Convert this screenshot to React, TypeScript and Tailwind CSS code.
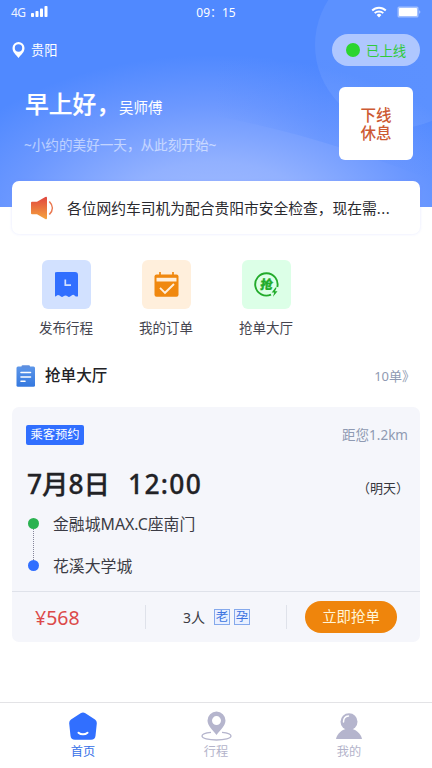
import type { ReactNode } from "react";

const FONT = "font-['Noto_Sans','Noto_Sans_CJK_SC',sans-serif]";

const StatusBar = () => (
  <div className="flex h-[25px] items-center justify-between px-[11px] text-white">
    <div className="flex w-[80px] items-center gap-[6px]">
      <span className="text-[12px] leading-4 tracking-[-0.6px] text-white/90">4G</span>
      <svg width="18" height="12" viewBox="0 0 18 12" fill="currentColor" className="-mt-[3px]">
        <rect x="0" y="8" width="3" height="4" rx="0.8" />
        <rect x="4.5" y="6" width="3" height="6" rx="0.8" />
        <rect x="9" y="3.5" width="3" height="8.5" rx="0.8" />
        <rect x="13.5" y="1" width="3" height="11" rx="0.8" />
      </svg>
    </div>
    <span className="text-[12px] leading-4">09：15</span>
    <div className="-mt-[2px] flex w-[80px] items-center justify-end gap-[10px]">
      <svg width="16" height="12" viewBox="0 0 16 12" fill="none" stroke="currentColor" strokeWidth="1.9">
        <path d="M1.2 4.5a9.6 9.6 0 0 1 13.6 0" />
        <path d="M3.7 7.2a6.1 6.1 0 0 1 8.6 0" />
        <path d="M8 11.5 5.6 9a3.4 3.4 0 0 1 4.8 0Z" fill="currentColor" stroke="none" />
      </svg>
      <svg width="24" height="12" viewBox="0 0 24 12" fill="currentColor">
        <rect x="0.5" y="0.5" width="21" height="11" rx="1.5" fillOpacity="0.45" />
        <rect x="2" y="2" width="18" height="8" rx="0.8" />
        <path d="M22.2 4v4l1.3-2Z" fillOpacity="0.5" />
      </svg>
    </div>
  </div>
);

const HeroBackdrop = () => (
  <svg className="absolute inset-0" width="432" height="207" viewBox="0 0 432 207">
    <defs>
      <radialGradient id="glow" gradientUnits="userSpaceOnUse" cx="0" cy="0" r="1" gradientTransform="translate(215 220) scale(290 165)">
        <stop offset="0" stopColor="#a3bcff" />
        <stop offset="0.35" stopColor="#92b1ff" />
        <stop offset="0.7" stopColor="#6c98ff" />
        <stop offset="1" stopColor="#5089ff" />
      </radialGradient>
      <linearGradient id="fold" x1="0" y1="0" x2="1" y2="0">
        <stop offset="0" stopColor="#4a84ff" stopOpacity="0" />
        <stop offset="0.5" stopColor="#4a84ff" stopOpacity="0.25" />
        <stop offset="1" stopColor="#4a84ff" stopOpacity="0" />
      </linearGradient>
    </defs>
    <rect width="432" height="207" fill="#5089ff" />
    <rect width="432" height="207" fill="url(#glow)" />
    <path d="M215 116C290 130 360 152 432 180V60H215Z" fill="url(#fold)" />
    <circle cx="398" cy="45" r="83" fill="#fff" fillOpacity="0.07" />
  </svg>
);

const Shortcut = ({ label, tint, children }: { label: string; tint: string; children: ReactNode }) => (
  <div className="flex w-[60px] flex-col items-center">
    <div className={`flex size-[49px] items-center justify-center rounded-[6px] ${tint}`}>{children}</div>
    <span className="mt-[9px] whitespace-nowrap text-[13.5px] leading-5 text-[#45454f]">{label}</span>
  </div>
);

const PublishIcon = () => (
  <svg width="23" height="25" viewBox="0 0 23 25">
    <path d="M3 0h17a3 3 0 0 1 3 3v21.3q-1.800.7-3.200-.6-1.500-1.600-3.200-.2l-1.500 1.100q-1.300.8-2.600-.3-2-1.800-4 0-1.300 1.100-2.600.3l-1.300-1q-1.700-1.500-3 .2-1 1.200-2.600.5V3a3 3 0 0 1 3-3Z" fill="#316fff" />
    <path d="M10.300 7.500v5.700h5.700" fill="none" stroke="#d2e1ff" strokeWidth="1.700" />
  </svg>
);

const OrderIcon = () => (
  <svg width="25" height="25" viewBox="0 0 25 25">
    <path d="M6 0v4M19 0v4" stroke="#f0880f" strokeWidth="1.700" />
    <rect x="0.500" y="2.500" width="24" height="22.200" rx="2" fill="#f0880f" />
    <path d="M2.500 5.800h20v3.700h-20Z" fill="#ffefdc" />
    <path d="m6 15.800 5 5L20 12" fill="none" stroke="#ffefdc" strokeWidth="1.900" />
  </svg>
);

const GrabIcon = () => (
  <svg width="25" height="25" viewBox="0 0 25 25">
    <path d="M17 22.600A11.200 11.200 0 1 1 23.300 15" fill="none" stroke="#22ab2b" strokeWidth="1.900" />
    <text x="12.300" y="16.800" textAnchor="middle" fontSize="12.500" fontWeight="900" fill="#22ab2b" stroke="#22ab2b" strokeWidth="0.300" transform="skewX(-8) translate(2 0)">
      抢
    </text>
    <path d="m21.500 15.500-3.800 5h2.500l-1.200 4.300 4.500-5.600h-2.500l1.700-3.700Z" fill="#22ab2b" />
  </svg>
);

const Tab = ({ label, color, children }: { label: string; color: string; children: ReactNode }) => (
  <div className={`flex w-[133px] flex-col items-center pt-[8px] ${color}`}>
    <div className="flex h-[30px] items-center">{children}</div>
    <span className="mt-[2px] text-[12.200px] leading-[18px]">{label}</span>
  </div>
);

export default function App() {
  return (
    <div className={`flex h-[768px] w-[432px] flex-col overflow-hidden bg-white ${FONT}`}>
      <header className="relative h-[207px] shrink-0">
        <HeroBackdrop />
        <div className="relative">
          <StatusBar />
          <div className="flex items-center justify-between px-[12px] pt-[9px]">
            <div className="flex items-center gap-[6px] text-white">
              <svg width="13" height="16" viewBox="0 0 13 16">
                <path fillRule="evenodd" d="M6.500 0a6 6 0 0 1 6 6c0 4.300-3.400 6.600-6 10C3.900 12.600.5 10.300.5 6a6 6 0 0 1 6-6Zm0 2.300a3.700 3.700 0 1 0 0 7.400 3.700 3.700 0 0 0 0-7.400Z" fill="#fff" />
              </svg>
              <span className="text-[13.200px] leading-5">贵阳</span>
            </div>
            <div className="flex h-[32px] w-[88px] items-center gap-[6px] rounded-full bg-[#afc7ff] pl-[14px] text-[13.400px] text-[#2fca3c]">
              <span className="size-[14px] rounded-full bg-[#2bd52f]" />
              <span className="mt-[2px] whitespace-nowrap">已上线</span>
            </div>
          </div>
          <div className="flex items-start justify-between pl-[25px] pr-[19px] pt-[21px] text-white">
            <div>
              <div className="-mt-px flex items-baseline whitespace-nowrap leading-[36px]">
                <span className="w-[94px] text-[23.800px] font-medium [-webkit-text-stroke:0.2px]">早上好，</span>
                <span className="text-[14.500px]">吴师傅</span>
              </div>
              <p className="-ml-px mt-[10px] whitespace-nowrap text-[13.600px] leading-5 text-white/55">~小约的美好一天，从此刻开始~</p>
            </div>
            <div className="flex h-[73px] w-[74px] flex-col items-center justify-center rounded-[6px] bg-white text-[15.500px] font-medium leading-[18px] text-[#cd5a33]">
              <span>下线</span>
              <span>休息</span>
            </div>
          </div>
        </div>
      </header>

      <section className="relative mx-[12px] -mt-[26px] flex h-[53px] shrink-0 items-center rounded-[7px] bg-white pl-[18px] shadow-[0_0_3px_rgba(120,140,255,0.2)]">
        <svg width="24" height="24" viewBox="0 0 24 24">
          <defs>
            <linearGradient id="horn" x1="0" y1="0" x2="0" y2="1">
              <stop offset="0" stopColor="#e0463f" />
              <stop offset="1" stopColor="#f5a33d" />
            </linearGradient>
          </defs>
          <path d="M2 5.800h5L15.300 1q1.700-.8 1.700 1v20q0 1.800-1.700 1L7 18.200H2q-1 0-1-1V6.800q0-1 1-1Z" fill="url(#horn)" />
          <path d="M19.300 5.500c4 4 4 9 0 13" fill="none" stroke="#ea7850" strokeWidth="1.600" />
        </svg>
        <p className="ml-[13px] whitespace-nowrap text-[14.750px] leading-5 text-[#29292e]">各位网约车司机为配合贵阳市安全检查，现在需<span className="tracking-[0.600px]">...</span></p>
      </section>

      <nav className="ml-[36px] mt-[26px] flex gap-[40px]">
        <Shortcut label="发布行程" tint="bg-[#d2e1ff]">
          <PublishIcon />
        </Shortcut>
        <Shortcut label="我的订单" tint="bg-[#ffefdc]">
          <OrderIcon />
        </Shortcut>
        <Shortcut label="抢单大厅" tint="bg-[#dcffe7]">
          <GrabIcon />
        </Shortcut>
      </nav>

      <div className="mt-[27px] flex h-[22px] items-center pl-[16px] pr-[17px]">
        <svg width="20" height="22" viewBox="0 0 20 22">
          <defs>
            <linearGradient id="board" x1="0" y1="0" x2="0" y2="1">
              <stop offset="0" stopColor="#5d96e9" />
              <stop offset="1" stopColor="#3478df" />
            </linearGradient>
          </defs>
          <rect x="0.500" y="1.500" width="18.500" height="20.300" rx="1.500" fill="url(#board)" />
          <rect x="5.500" y="0.200" width="8.500" height="3" rx="1.200" fill="#5d8fe0" />
          <path d="M5 7.500h9.500M5 12h9.500M5 16.300h4" stroke="#fff" strokeWidth="1.600" strokeLinecap="round" />
        </svg>
        <h2 className="ml-[9px] text-[15.600px] font-medium text-[#222226]">抢单大厅</h2>
        <span className="ml-auto mt-[2px] text-[13px] text-[#8f9ab2]">10单》</span>
      </div>

      <article className="mx-[12px] mt-[20px] h-[235px] shrink-0 rounded-[7px] bg-[#f5f6fb]">
        <div className="flex h-[185px] flex-col border-b border-[#dfe2ea] pl-[14px] pt-[18px]">
          <div className="flex items-center justify-between pr-[12px]">
            <span className="flex h-[20px] w-[58px] items-center justify-center whitespace-nowrap rounded-[2px] bg-[#316fff] text-[12.300px] text-white">乘客预约</span>
            <span className="text-[13.500px] leading-5 text-[#8f9ab2]">距您1.2km</span>
          </div>
          <div className="mt-[20px] flex h-[38px] items-center justify-between pr-[11px] leading-[38px]">
            <div className="ml-px flex items-baseline text-[26.400px] font-medium text-[#222226] [-webkit-text-stroke:0.3px]">
              <span className="w-[101px]">7月8日</span>
              <span className="tracking-[1.300px]">12:00</span>
            </div>
            <span className="mt-[8px] text-[13px] text-[#36363d]">（明天）</span>
          </div>
          <div className="mt-[10px] flex">
            <div className="flex w-[14px] flex-col items-center pt-[5px]">
              <span className="size-[11px] rounded-full bg-[#2bb251]" />
              <span className="h-[31px] border-l border-dotted border-[#85859a]" />
              <span className="size-[11px] rounded-full bg-[#316fff]" />
            </div>
            <div className="ml-[13px] flex flex-col gap-[20px] text-[15.850px] leading-[22px] text-[#3b3b44]">
              <span>金融城MAX.C座南门</span>
              <span>花溪大学城</span>
            </div>
          </div>
        </div>
        <div className="flex h-[50px] items-center">
          <div className="w-[133px] pl-[23px] pt-[2px] text-[19.500px] text-[#dc4a4a]">¥568</div>
          <div className="flex h-[24px] w-[142px] items-center border-x border-[#dfe2ea] pl-[37px] text-[#3b3b44]">
            <span className="text-[14px]">3人</span>
            <span className="ml-[9px] flex size-[16px] items-center justify-center border border-[#85a9ec] bg-[#e9f0ff] pt-px text-[12.500px] leading-none text-[#3c74e0]">老</span>
            <span className="ml-[4px] flex size-[16px] items-center justify-center border border-[#85a9ec] bg-[#e9f0ff] pt-px text-[12.500px] leading-none text-[#3c74e0]">孕</span>
          </div>
          <button className="ml-[18px] h-[32px] w-[92px] rounded-full bg-[#ef850c] text-[14.400px] text-[#fff5d8]">立即抢单</button>
        </div>
      </article>

      <footer className="mt-auto flex h-[66px] shrink-0 justify-center border-t border-[#e3e3e6]">
        <Tab label="首页" color="text-[#3570e8]">
          <svg width="28" height="28" viewBox="0 0 28 28">
            <path d="M11.600 1.200q2.400-1.600 4.800 0l9.600 6.300q2 1.500 1.800 4l-1.300 12.300q-.4 4-4.500 4H6q-4.100 0-4.500-4L.2 11.500Q0 9 2 7.500Z" fill="#316fff" />
            <path d="M9.500 20.700c2.500 2.200 6.500 2.200 9 0" fill="none" stroke="#fff" strokeWidth="2" strokeLinecap="round" />
          </svg>
        </Tab>
        <Tab label="行程" color="text-[#b3b3ca]">
          <svg width="31" height="30" viewBox="0 0 31 30">
            <path fillRule="evenodd" d="M15.500.6a9 9 0 0 1 9 9c0 5-5 9.500-9 14.400-4-4.900-9-9.400-9-14.400a9 9 0 0 1 9-9Zm0 4.500a4.500 4.500 0 1 0 0 9 4.500 4.500 0 0 0 0-9Z" fill="#b5b5cd" />
            <path d="M10 21.300C4.500 21.800 1 23.200 1 25c0 2.300 6.500 4 14.500 4S30 27.300 30 25c0-1.800-3.500-3.200-9-3.700" fill="none" stroke="#b5b5cd" strokeWidth="1.300" />
          </svg>
        </Tab>
        <Tab label="我的" color="text-[#b3b3ca]">
          <svg width="26" height="28" viewBox="0 0 26 28">
            <circle cx="13" cy="9.800" r="8.500" fill="#b5b5cd" />
            <path d="M0 27c1-5 6-10.500 13-10.500S25 22 26 27Z" fill="#b5b5cd" />
            <path d="M7.500 10c0-3.500 2-5.800 5-6" fill="none" stroke="#fff" strokeWidth="1.500" strokeLinecap="round" />
          </svg>
        </Tab>
      </footer>
    </div>
  );
}
